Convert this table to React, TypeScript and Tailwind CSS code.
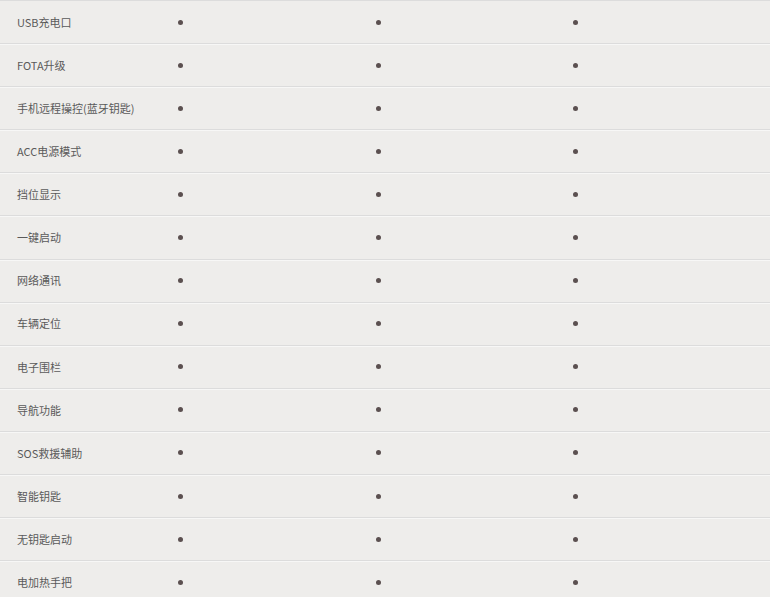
const rows = [
  'USB充电口',
  'FOTA升级',
  '手机远程操控(蓝牙钥匙)',
  'ACC电源模式',
  '挡位显示',
  '一键启动',
  '网络通讯',
  '车辆定位',
  '电子围栏',
  '导航功能',
  'SOS救援辅助',
  '智能钥匙',
  '无钥匙启动',
  '电加热手把',
];

function Dot() {
  return <span className="block w-[5px] h-[5px] rounded-full bg-[#5b5050]" />;
}

export default function App() {
  return (
    <div
      className="w-[770px] h-[597px] overflow-hidden bg-[#eeedeb] text-[#5a5a5a] text-[11px]"
      style={{ fontFamily: '"Microsoft YaHei", "Noto Sans CJK SC", sans-serif' }}
    >
      <div className="border-t border-[#dcdcdc]">
        {rows.map((name) => (
          <div
            key={name}
            className="grid grid-cols-[178px_198px_197px_1fr] items-center h-[43.1px] border-b border-[#dcdcdc] shadow-[0_1px_0_#f7f7f6]"
          >
            <div className="pl-[17px]">{name}</div>
            <div><Dot /></div>
            <div><Dot /></div>
            <div><Dot /></div>
          </div>
        ))}
      </div>
    </div>
  );
}
